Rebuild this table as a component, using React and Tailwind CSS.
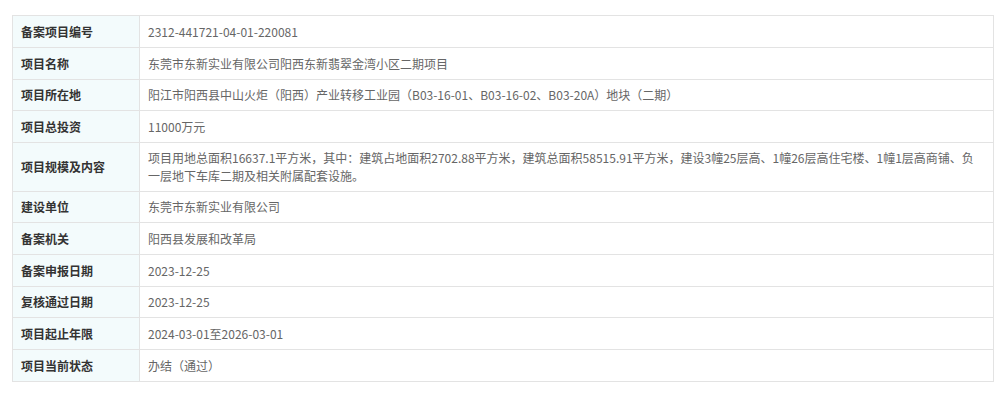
import React from "react";

const rows = [
  ["备案项目编号", "2312-441721-04-01-220081", true],
  ["项目名称", "东莞市东新实业有限公司阳西东新翡翠金湾小区二期项目", true],
  ["项目所在地", "阳江市阳西县中山火炬（阳西）产业转移工业园（B03-16-01、B03-16-02、B03-20A）地块（二期）", false],
  ["项目总投资", "11000万元", true],
  ["项目规模及内容", "项目用地总面积16637.1平方米，其中：建筑占地面积2702.88平方米，建筑总面积58515.91平方米，建设3幢25层高、1幢26层高住宅楼、1幢1层高商铺、负一层地下车库二期及相关附属配套设施。", false],
  ["建设单位", "东莞市东新实业有限公司", false],
  ["备案机关", "阳西县发展和改革局", true],
  ["备案申报日期", "2023-12-25", true],
  ["复核通过日期", "2023-12-25", false],
  ["项目起止年限", "2024-03-01至2026-03-01", true],
  ["项目当前状态", "办结（通过）", true],
];

export default function App() {
  return (
    <div
      className="w-[1000px] h-[409px] bg-white pt-[15px] pl-[12px] pr-[6px]"
      style={{ fontFamily: '"Microsoft YaHei", "Noto Sans CJK SC", "Noto Sans", sans-serif' }}
    >
      <table className="w-full border-collapse text-[12px] leading-[18px]">
        <tbody>
          {rows.map(([k, v, tall]) => (
            <tr key={k}>
              <td
                className={
                  "w-[127px] border border-[#e3e3e3] bg-[#f3fbfc] px-[8px] pb-[6px] font-bold text-[#333] align-middle " +
                  (tall ? "pt-[7px]" : "pt-[6px]")
                }
              >
                {k}
              </td>
              <td
                className={
                  "border border-[#e3e3e3] px-[8px] pb-[6px] text-[#666] align-middle " +
                  (tall ? "pt-[7px]" : "pt-[6px]")
                }
              >
                {v}
              </td>
            </tr>
          ))}
        </tbody>
      </table>
    </div>
  );
}
